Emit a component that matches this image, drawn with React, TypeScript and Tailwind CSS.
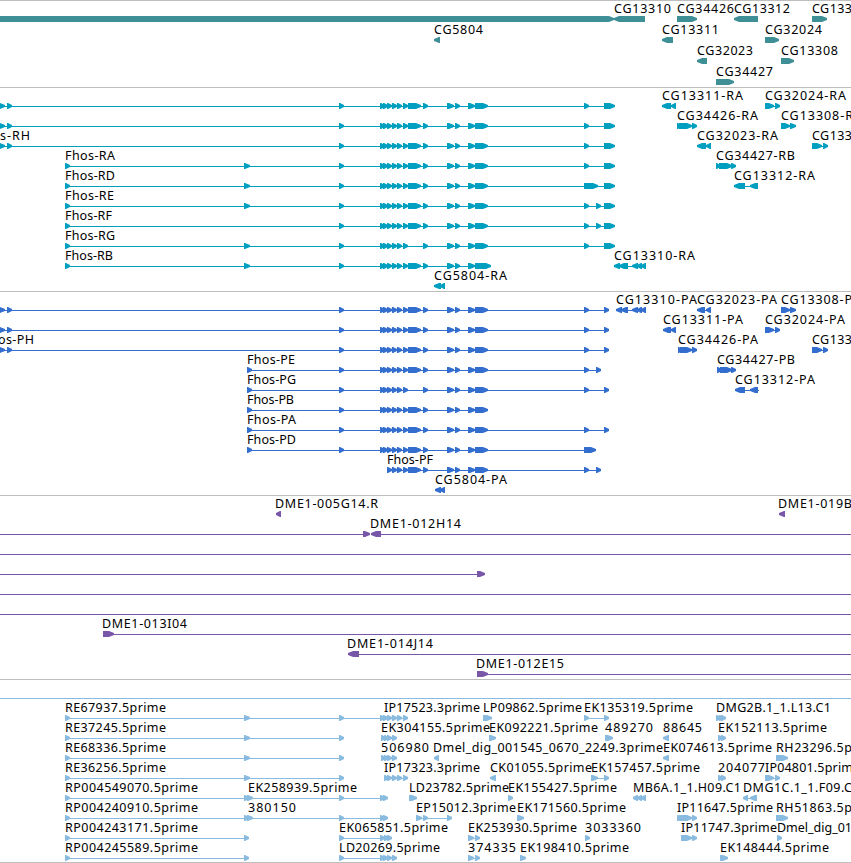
type Span = [number, number];

interface Feature {
  row: number;
  // label text with its left and right edge
  label?: [string, number, number];
  blocks?: Span[];
  // intron line; defaults to the extent of the blocks
  line?: Span;
  reverse?: boolean;
}

interface TrackData {
  id: string;
  color: string;
  heightClass: string;
  height: number;
  pitch: number;
  features: Feature[];
}

const WIDTH = 851;

const small: Span[] = [[380, 385], [383, 388], [387, 392], [392, 397], [397, 402], [403, 408]];
const tail: Span[] = [[423, 428], [447, 454], [455, 460], [468, 475]];
const exons: Span[] = [[339, 344], ...small, [408, 421], ...tail, [475, 488]];
const exonsShort: Span[] = [[339, 344], ...small, ...tail, [475, 488]];
const upstream: Span[] = [[-1, 5], [7, 12]];
const start: Span = [65, 70];
const second: Span = [244, 250];
const exon584: Span = [584, 589];
const exon596: Span = [596, 601];
const utr: Span = [604, 615];
const cdsEnd: Span = [604, 609];
const cdsStart: Span = [247, 252];

const genes: Feature[] = [
  { row: 0, blocks: [[-10, 614]] },
  { row: 0, label: ['CG13310', 614, 671], blocks: [[614, 645]], reverse: true },
  { row: 0, label: ['CG34426', 677, 734], blocks: [[677, 697]] },
  { row: 0, label: ['CG13312', 734, 790], blocks: [[734, 758]], reverse: true },
  { row: 0, label: ['CG133', 812, 852], blocks: [[812, 827]] },
  { row: 1, label: ['CG5804', 434, 483], blocks: [[434, 440]], reverse: true },
  { row: 1, label: ['CG13311', 662, 719], blocks: [[662, 673]], reverse: true },
  { row: 1, label: ['CG32024', 765, 822], blocks: [[765, 779]] },
  { row: 2, label: ['CG32023', 697, 753], blocks: [[697, 707]], reverse: true },
  { row: 2, label: ['CG13308', 781, 838], blocks: [[781, 794]] },
  { row: 3, label: ['CG34427', 716, 773], blocks: [[716, 734]] },
];

const transcripts: Feature[] = [
  { row: 0, blocks: [...upstream, ...exons, exon584, utr] },
  { row: 1, blocks: [...upstream, ...exons, exon584, utr] },
  { row: 2, label: ['s-RH', 0, 30], blocks: [...upstream, ...exons, exon584, utr] },
  { row: 3, label: ['Fhos-RA', 65, 115], blocks: [start, second, ...exons, exon584, utr] },
  { row: 4, label: ['Fhos-RD', 65, 115], blocks: [start, second, ...exons, [584, 598], utr] },
  { row: 5, label: ['Fhos-RE', 65, 114], blocks: [start, second, ...exons, exon584, exon596, utr] },
  { row: 6, label: ['Fhos-RF', 65, 112], blocks: [start, ...exons, exon584, exon596, utr] },
  { row: 7, label: ['Fhos-RG', 65, 115], blocks: [start, second, ...exonsShort, exon584, utr] },
  { row: 8, label: ['Fhos-RB', 65, 113], blocks: [start, second, ...exons, [475, 491]] },
  { row: 9, label: ['CG5804-RA', 434, 507], blocks: [[434, 441], [440, 445]], reverse: true },
  { row: 0, label: ['CG13311-RA', 662, 743], blocks: [[662, 671], [671, 676]], reverse: true },
  { row: 0, label: ['CG32024-RA', 765, 846], blocks: [[765, 774], [775, 780]] },
  { row: 1, label: ['CG34426-RA', 677, 758], blocks: [[677, 681], [679, 692], [692, 697]] },
  { row: 1, label: ['CG13308-R', 781, 853], blocks: [[781, 790], [790, 796]] },
  { row: 2, label: ['CG32023-RA', 697, 778], blocks: [[697, 706], [706, 711]], reverse: true },
  { row: 2, label: ['CG133', 812, 852], blocks: [[812, 822], [823, 828]] },
  { row: 3, label: ['CG34427-RB', 716, 795], blocks: [[716, 720], [719, 732], [731, 736]] },
  { row: 4, label: ['CG13312-RA', 734, 815], blocks: [[734, 745], [750, 758]], reverse: true },
  { row: 8, label: ['CG13310-RA', 614, 695], blocks: [[614, 620], [619, 628], [632, 638], [637, 642], [641, 646]], reverse: true },
];

const proteins: Feature[] = [
  { row: 0, blocks: [...upstream, ...exons, exon584, cdsEnd] },
  { row: 1, blocks: [...upstream, ...exons, exon584, cdsEnd] },
  { row: 2, label: ['os-PH', -2, 34], blocks: [...upstream, ...exons, exon584, cdsEnd] },
  { row: 3, label: ['Fhos-PE', 247, 295], blocks: [cdsStart, ...exons, exon584, exon596] },
  { row: 4, label: ['Fhos-PG', 247, 296], blocks: [cdsStart, ...exonsShort, exon584, cdsEnd] },
  { row: 5, label: ['Fhos-PB', 247, 294], blocks: [cdsStart, ...exons] },
  { row: 6, label: ['Fhos-PA', 247, 296], blocks: [cdsStart, ...exons, exon584, cdsEnd] },
  { row: 7, label: ['Fhos-PD', 247, 296], blocks: [cdsStart, ...exons, [584, 596]] },
  { row: 8, label: ['Fhos-PF', 387, 433], blocks: [...exons.slice(3), exon584, exon596] },
  { row: 9, label: ['CG5804-PA', 435, 507], blocks: [[435, 441], [440, 445]], reverse: true },
  { row: 0, label: ['CG13310-PA', 616, 697], blocks: [[616, 622], [621, 628], [632, 638], [637, 642], [641, 646]], reverse: true },
  { row: 0, label: ['CG32023-PA', 697, 777], blocks: [[697, 705], [706, 711]], reverse: true },
  { row: 0, label: ['CG13308-P', 781, 852], blocks: [[781, 790], [790, 796]] },
  { row: 1, label: ['CG13311-PA', 663, 743], blocks: [[663, 671], [671, 676]], reverse: true },
  { row: 1, label: ['CG32024-PA', 765, 845], blocks: [[765, 774], [775, 780]] },
  { row: 2, label: ['CG34426-PA', 678, 758], blocks: [[678, 682], [680, 692], [692, 697]] },
  { row: 2, label: ['CG133', 812, 852], blocks: [[812, 822], [823, 828]] },
  { row: 3, label: ['CG34427-PB', 717, 795], blocks: [[717, 722], [720, 732], [731, 736]] },
  { row: 4, label: ['CG13312-PA', 735, 815], blocks: [[735, 745], [750, 758]], line: [735, 759], reverse: true },
];

const clones: Feature[] = [
  { row: 0, label: ['DME1-005G14.R', 275, 378], blocks: [[276, 281]], reverse: true },
  { row: 0, label: ['DME1-019B', 778, 852], blocks: [[779, 785]], reverse: true },
  { row: 1, blocks: [[363, 370]], line: [0, 370] },
  { row: 1, label: ['DME1-012H14', 370, 461], blocks: [[371, 381]], line: [371, WIDTH], reverse: true },
  { row: 2, line: [0, WIDTH] },
  { row: 3, blocks: [[477, 485]], line: [0, 485] },
  { row: 4, line: [0, WIDTH] },
  { row: 5, line: [0, WIDTH] },
  { row: 6, label: ['DME1-013I04', 102, 187], blocks: [[103, 114]], line: [103, WIDTH] },
  { row: 7, label: ['DME1-014J14', 347, 433], blocks: [[348, 359]], line: [348, WIDTH], reverse: true },
  { row: 8, label: ['DME1-012E15', 476, 564], blocks: [[477, 488]], line: [477, WIDTH] },
];

const reEst: Span[] = [start, second, [339, 344]];
const ekSmall: Span[] = [[381, 386], [384, 389], [387, 392], [392, 397]];
const pair468: Span[] = [[468, 474], [475, 480]];

const ests: Feature[] = [
  { row: 0, line: [0, WIDTH] },
  { row: 1, label: ['RE67937.5prime', 65, 166], blocks: [...reEst, ...small] },
  { row: 1, label: ['IP17523.3prime', 384, 480] },
  { row: 1, label: ['LP09862.5prime', 483, 582], blocks: [[483, 492]] },
  { row: 1, label: ['EK135319.5prime', 584, 693], blocks: [exon584, cdsEnd] },
  { row: 1, label: ['DMG2B.1_1.L13.C1', 716, 831], blocks: [[716, 721], [719, 724], [721, 726]] },
  { row: 2, label: ['RE37245.5prime', 65, 166], blocks: reEst },
  { row: 2, label: ['EK304155.5prime', 381, 490], blocks: ekSmall },
  { row: 2, label: ['EK092221.5prime', 489, 598], blocks: [[489, 496]] },
  { row: 2, label: ['489270', 605, 653], blocks: [[605, 613]] },
  { row: 2, label: ['88645', 663, 702], blocks: [[663, 669]], reverse: true },
  { row: 2, label: ['EK152113.5prime', 718, 827], blocks: [[718, 723], [721, 726]] },
  { row: 3, label: ['RE68336.5prime', 65, 166], blocks: reEst },
  { row: 3, label: ['506980', 381, 429], blocks: ekSmall },
  { row: 3, label: ['Dmel_dig_001545_0670_2249.3prime', 433, 663], blocks: [[434, 439]], reverse: true },
  { row: 3, label: ['EK074613.5prime', 663, 772], blocks: [[663, 669]], reverse: true },
  { row: 3, label: ['RH23296.5p', 776, 852], blocks: [[776, 788]] },
  { row: 4, label: ['RE36256.5prime', 65, 166], blocks: reEst },
  { row: 4, label: ['IP17323.3prime', 384, 480], blocks: [[384, 389], ...small.slice(2)] },
  { row: 4, label: ['CK01055.5prime', 490, 592], blocks: [[490, 496]], reverse: true },
  { row: 4, label: ['EK157457.5prime', 591, 700], blocks: [[591, 598], cdsEnd] },
  { row: 4, label: ['204077', 718, 765], blocks: [[718, 723], [721, 726]] },
  { row: 4, label: ['IP04801.5prim', 765, 853], blocks: [[765, 774], [775, 780]] },
  { row: 5, label: ['RP004549070.5prime', 65, 198], blocks: [start, [244, 249], [247, 253], [339, 344], [380, 385], [383, 388]] },
  { row: 5, label: ['EK258939.5prime', 248, 357] },
  { row: 5, label: ['LD23782.5prime', 409, 509], blocks: [[409, 417]] },
  { row: 5, label: ['EK155427.5prime', 508, 617], blocks: [[508, 513]] },
  { row: 5, label: ['MB6A.1_1.H09.C1', 633, 741], blocks: [[633, 638], [637, 642], [641, 646]], reverse: true },
  { row: 5, label: ['DMG1C.1_1.F09.C', 743, 852], blocks: [[743, 748], [750, 757]], reverse: true },
  { row: 6, label: ['RP004240910.5prime', 65, 198], blocks: [start, [244, 249], [247, 253], [339, 344], [380, 385], [383, 388]] },
  { row: 6, label: ['380150', 248, 296] },
  { row: 6, label: ['EP15012.3prime', 416, 516], blocks: [[416, 422], [423, 428], [447, 452]] },
  { row: 6, label: ['EK171560.5prime', 517, 626], blocks: [[517, 524]] },
  { row: 6, label: ['IP11647.5prime', 677, 773], blocks: [[677, 681], [679, 692], [692, 697]] },
  { row: 6, label: ['RH51863.5p', 776, 852], blocks: [[776, 788]] },
  { row: 7, label: ['RP004243171.5prime', 65, 198], blocks: [start, [244, 249]] },
  { row: 7, label: ['EK065851.5prime', 339, 448], blocks: [[339, 344], [380, 385], [384, 389], [387, 392]] },
  { row: 7, label: ['EK253930.5prime', 468, 577], blocks: pair468 },
  { row: 7, label: ['3033360', 585, 641], blocks: [[585, 590]] },
  { row: 7, label: ['IP11747.3prime', 681, 777], blocks: [[681, 692], [692, 697]] },
  { row: 7, label: ['Dmel_dig_01', 777, 852], blocks: [[777, 782]] },
  { row: 8, label: ['RP004245589.5prime', 65, 198], blocks: [start, [244, 249]] },
  { row: 8, label: ['LD20269.5prime', 339, 440], blocks: [[339, 344], [380, 385], [383, 388], [387, 392], [392, 397]] },
  { row: 8, label: ['374335', 468, 516], blocks: pair468 },
  { row: 8, label: ['EK198410.5prime', 520, 629], blocks: [[520, 526]] },
  { row: 8, label: ['EK148444.5prime', 720, 829], blocks: [[720, 728]] },
];

const tracks: TrackData[] = [
  { id: 'genes', color: '#3f8f96', heightClass: 'h-[87px]', height: 86, pitch: 21, features: genes },
  { id: 'transcripts', color: '#009fc0', heightClass: 'h-[204px]', height: 203, pitch: 20, features: transcripts },
  { id: 'proteins', color: '#336ecf', heightClass: 'h-[204px]', height: 203, pitch: 20, features: proteins },
  { id: 'clones', color: '#7857a9', heightClass: 'h-[184px]', height: 183, pitch: 20, features: clones },
  { id: 'ests', color: '#88bbdf', heightClass: 'h-[183px]', height: 182, pitch: 20, features: ests },
];

// Six pixel high block with a pointed end in the direction of the strand
const arrowPoints = ([x0, x1]: Span, y: number, reverse?: boolean) => {
  const len = x1 - x0;
  const head = len > 8 ? 5 : Math.min(len - 1, 5);
  const [back, neck, tip] = reverse ? [x1, x0 + head, x0] : [x0, x1 - head, x1];
  return `${back},${y - 3} ${neck},${y - 3} ${tip},${y - 1} ${tip},${y + 1} ${neck},${y + 3} ${back},${y + 3}`;
};

const FeatureGlyph = ({ feature, pitch }: { feature: Feature; pitch: number }) => {
  const { label, blocks = [], reverse } = feature;
  const y = 18 + feature.row * pitch;
  const line = feature.line ?? (blocks.length > 1 ? [blocks[0][0], blocks[blocks.length - 1][1] - 2] : null);

  return (
    <g>
      {line && <rect x={line[0]} y={y} width={line[1] - line[0]} height={1} shapeRendering="crispEdges" />}
      {blocks.map((block, i) => (
        <polygon key={i} points={arrowPoints(block, y, reverse)} />
      ))}
      {label && (
        <text x={label[1]} y={y - 6} textLength={label[2] - label[1]} className="fill-black">
          {label[0]}
        </text>
      )}
    </g>
  );
};

const Track = ({ track }: { track: TrackData }) => (
  <section className={`${track.heightClass} border-t border-[#bebebe] overflow-hidden`}>
    <svg
      width={WIDTH}
      height={track.height}
      fill={track.color}
      className="block font-['Noto_Sans',sans-serif] text-[12.5px]"
    >
      {track.features.map((feature, i) => (
        <FeatureGlyph key={i} feature={feature} pitch={track.pitch} />
      ))}
    </svg>
  </section>
);

export default function App() {
  return (
    <main className="w-[851px] h-[863px] overflow-hidden bg-white border-b border-[#bebebe]">
      {tracks.map((track) => (
        <Track key={track.id} track={track} />
      ))}
    </main>
  );
}
